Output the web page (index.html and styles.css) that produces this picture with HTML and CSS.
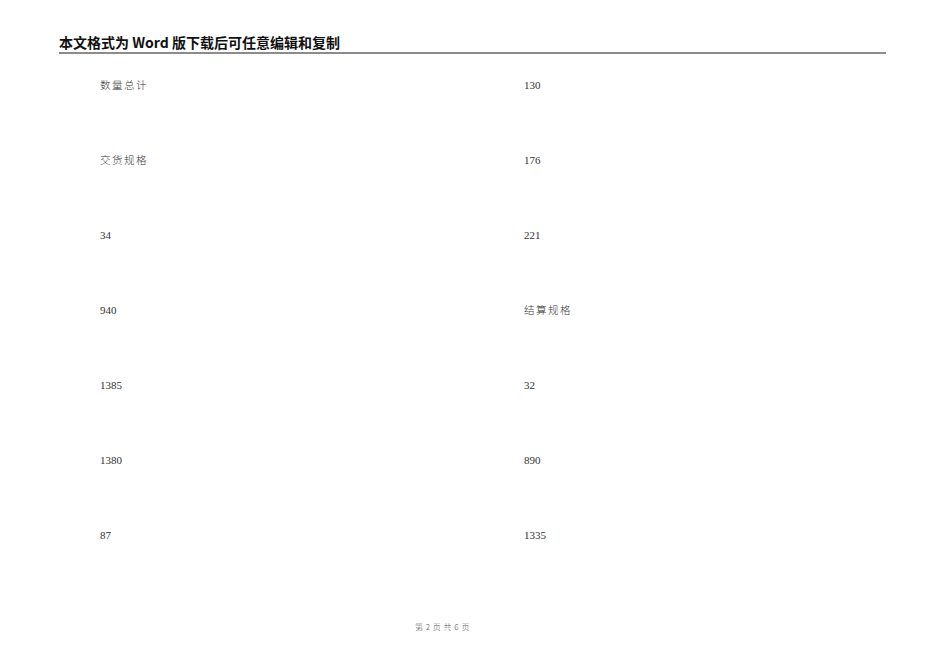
FILE: index.html
```html
<!DOCTYPE html>
<html lang="zh">
<head>
<meta charset="utf-8">
<link rel="stylesheet" href="styles.css">
</head>
<body>
<div class="page">
  <header class="doc-header">
    <div class="doc-title">本文格式为 Word 版下载后可任意编辑和复制</div>
  </header>
  <main class="grid">
    <div class="cell cjk">数量总计</div><div class="cell">130</div>
    <div class="cell cjk">交货规格</div><div class="cell">176</div>
    <div class="cell">34</div><div class="cell">221</div>
    <div class="cell">940</div><div class="cell cjk">结算规格</div>
    <div class="cell">1385</div><div class="cell">32</div>
    <div class="cell">1380</div><div class="cell">890</div>
    <div class="cell">87</div><div class="cell">1335</div>
  </main>
  <footer class="doc-footer">第 2 页 共 6 页</footer>
</div>
</body>
</html>
```
FILE: styles.css
```css
html, body {
  margin: 0;
  padding: 0;
  background: #ffffff;
}
.page {
  width: 950px;
  height: 672px;
  position: relative;
  font-family: "Liberation Serif", "Noto Sans CJK SC", serif;
  color: #333333;
}
.doc-header {
  padding: 34px 0 0 59px;
}
.doc-title {
  width: 827px;
  font-family: "Noto Sans CJK SC", "Liberation Sans", sans-serif;
  font-weight: 700;
  font-size: 14px;
  line-height: 17px;
  color: #111111;
  padding-bottom: 1px;
  border-bottom: 2px solid #8c8c8c;
}
.grid {
  display: grid;
  grid-template-columns: 424px 1fr;
  grid-auto-rows: 75px;
  padding-left: 100px;
  margin-top: 24px;
}
.cell {
  font-size: 11px;
  line-height: 14px;
  color: #333333;
}
.cjk {
  font-family: "Noto Sans CJK SC", serif;
  font-weight: 300;
  letter-spacing: 1.5px;
  font-size: 10.5px;
}
.doc-footer {
  position: absolute;
  left: 415px;
  top: 622px;
  font-size: 8px;
  line-height: 10px;
  color: #555555;
  font-family: "Noto Sans CJK SC", serif;
  font-weight: 300;
  letter-spacing: 0.5px;
}
```
